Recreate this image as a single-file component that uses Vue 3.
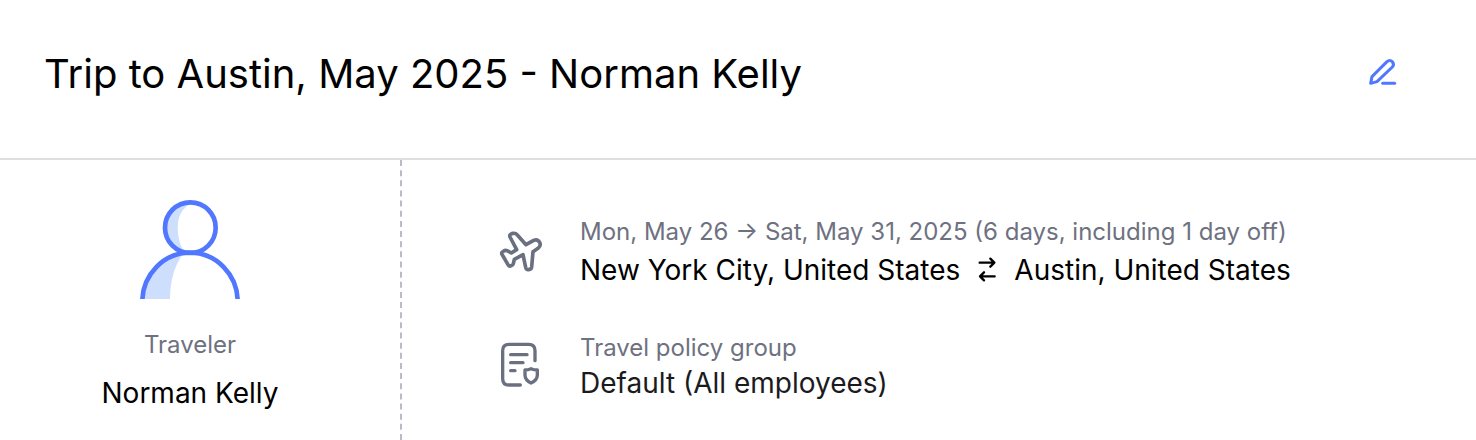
<script setup>
const title = 'Trip to Austin, May 2025 - Norman Kelly'
const traveler = 'Norman Kelly'
</script>

<template>
  <main class="trip">
    <header class="head">
      <h1>{{ title }}</h1>
      <button class="edit" type="button" aria-label="Edit trip name">
        <svg viewBox="0 0 210 180" width="70" height="60" fill="none" stroke="#5277ff" stroke-width="9" stroke-linecap="round" stroke-linejoin="round" aria-hidden="true">
          <path d="M62 118L66 98L111 53Q119 46 127 53Q134 61 127 69L81 113Z" />
          <path d="M98 118H134" />
        </svg>
      </button>
    </header>
    <div class="body">
      <section class="person">
        <svg class="avatar" viewBox="30 30 300 297" width="100" height="99" fill="none" aria-hidden="true">
          <path d="M181 37A75 75 0 0 0 160 184Q143 150 143 112Q143 62 184 39Z" fill="#cddffd" />
          <path d="M37 327A143 147 0 0 1 160 190Q120 245 120 327Z" fill="#cddffd" />
          <g stroke="#5277ff" stroke-width="14">
            <circle cx="181" cy="113" r="76" />
            <path d="M37 335A143 147 0 0 1 323 335" />
          </g>
        </svg>
        <span class="label">Traveler</span>
        <span class="name">{{ traveler }}</span>
      </section>
      <section class="details">
        <div class="row">
          <svg viewBox="0 0 195 180" width="65" height="60" fill="none" stroke="#6b7080" stroke-width="11" stroke-linecap="round" stroke-linejoin="round" aria-hidden="true">
            <path d="M108 77L82 48Q77 42 70 43L65 44Q57 47 60 54L80 92L64 102L51 95Q46 93 40 97Q33 100 36 106L54 137Q58 143 64 140Q69 139 70 134L73 121L99 107L107 145Q109 153 116 152Q124 151 125 144L129 98L144 88Q154 80 149 70Q143 59 131 64Z" />
          </svg>
          <div class="info">
            <span class="label">Mon, May 26 → Sat, May 31, 2025 (6 days, including 1 day off)</span>
            <span class="value route">
              <span>New York City, United States</span>
              <svg viewBox="0 0 60 84" width="20" height="28" fill="none" stroke="#000" stroke-width="7" stroke-linecap="round" stroke-linejoin="round" role="img" aria-label="round trip">
                <path d="M8 20H51M40 8L52 20L40 32M53 61H9M21 49L9 61L21 73" />
              </svg>
              <span>Austin, United States</span>
            </span>
          </div>
        </div>
        <div class="row policy">
          <svg viewBox="0 0 195 180" width="65" height="60" fill="none" stroke="#6b7080" stroke-width="10" stroke-linecap="round" stroke-linejoin="round" aria-hidden="true">
            <path d="M91 150H57Q38 150 38 131V47Q38 28 57 28H116Q135 28 135 47V77M62 59H111M62 83H99M62 107H75" />
            <path d="M123 101Q132 105 142 105V121Q141 136 123 144Q106 136 105 121V105Q114 105 123 101Z" />
          </svg>
          <div class="info">
            <span class="label">Travel policy group</span>
            <span class="value dark">Default (All employees)</span>
          </div>
        </div>
      </section>
    </div>
  </main>
</template>

<style>
body {
  margin: 0;
  background: #fff;
}
</style>

<style scoped>
.trip {
  min-height: 100vh;
  display: flex;
  flex-direction: column;
  font-family: Inter, "Liberation Sans", sans-serif;
  color: #000;
}
.head {
  display: flex;
  align-items: center;
  justify-content: space-between;
  padding: 44px 56px 54px 44px;
  border-bottom: 2px solid #dedfe1;
}
h1 {
  margin: 0;
  font-size: 40px;
  line-height: 60px;
  font-weight: 400;
}
.edit {
  display: flex;
  margin: 0;
  padding: 0;
  border: 0;
  background: none;
  cursor: pointer;
}
svg {
  display: block;
  flex: none;
}
.body {
  flex: 1;
  display: flex;
}
.person {
  width: 400px;
  box-sizing: border-box;
  flex: none;
  display: flex;
  flex-direction: column;
  align-items: center;
  padding: 40px 20px 0 0;
}
.label {
  font-size: 24px;
  line-height: 36px;
  color: #6e7180;
}
.person .label {
  margin-top: 28px;
}
.name,
.value {
  font-size: 28px;
  line-height: 40px;
}
.name {
  margin-top: 10px;
}
.details {
  flex: 1;
  min-width: 0;
  border-left: 2px dashed #b9bbc6;
  padding: 54px 24px 0 88px;
}
.row {
  display: flex;
  align-items: flex-start;
  gap: 25px;
}
.row > svg {
  margin-top: 5px;
}
.policy {
  margin-top: 40px;
}
.info {
  display: flex;
  flex-direction: column;
}
.route {
  display: flex;
  align-items: center;
  gap: 17px;
}
.dark {
  color: #1b1b1e;
  line-height: 34px;
}
</style>
